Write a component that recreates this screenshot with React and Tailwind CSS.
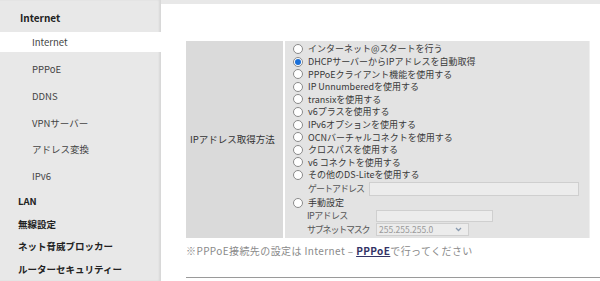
import React from 'react'

const font = { fontFamily: '"Noto Sans CJK JP", "Liberation Sans", sans-serif' }

const subItems = ['Internet', 'PPPoE', 'DDNS', 'VPNサーバー', 'アドレス変換', 'IPv6']
const groups = ['LAN', '無線設定', 'ネット脅威ブロッカー', 'ルーターセキュリティー']

const modes = [
  'インターネット@スタートを行う',
  'DHCPサーバーからIPアドレスを自動取得',
  'PPPoEクライアント機能を使用する',
  'IP Unnumberedを使用する',
  'transixを使用する',
  'v6プラスを使用する',
  'IPv6オプションを使用する',
  'OCNバーチャルコネクトを使用する',
  'クロスパスを使用する',
  'v6 コネクトを使用する',
  'その他のDS-Liteを使用する',
]

function Radio({ checked }) {
  return (
    <span className="flex h-[10px] w-[10px] shrink-0 items-center justify-center rounded-full border border-[#8a8a8a] bg-white">
      {checked && <span className="h-[6px] w-[6px] rounded-full bg-[#1a6fd8]" />}
    </span>
  )
}

function Sidebar() {
  return (
    <div className="w-[161px] shrink-0 bg-[#e8e8e8] pt-[6px] shadow-[inset_-2px_0_2px_rgba(0,0,0,0.07)]">
      <div className="flex h-[23px] items-center pl-[20px] text-[10px] font-bold text-[#222]">Internet</div>
      {subItems.map((s, i) => (
        <div key={s} className="flex h-[26.8px] items-center">
          <div className={`flex h-[20px] w-full items-center pl-[32px] text-[9.5px] text-[#444] ${i === 0 ? 'bg-white' : ''}`}>
            {s}
          </div>
        </div>
      ))}
      {groups.map((g) => (
        <div key={g} className="flex h-[22.6px] items-center pl-[18px] text-[9.5px] font-bold text-[#222]">
          {g}
        </div>
      ))}
    </div>
  )
}

export default function App() {
  return (
    <div className="flex h-[281px] w-[600px] overflow-hidden bg-[#e8e8e8]" style={font}>
      <Sidebar />
      <div className="mt-[4px] flex-1 bg-white pl-[25px] pt-[37px]">
        <div className="flex w-[404px] bg-[#e3e3e3]">
          <div className="flex w-[99px] items-center border-r-2 border-white bg-[#dadada] pl-[4px] text-[9.5px] text-[#333]">
            IPアドレス取得方法
          </div>
          <div className="flex-1 whitespace-nowrap border-r border-[#efefef] pb-[1px] pl-[8px] pr-[4px] pt-[1.7px] text-[9px] text-[#383838]">
            {modes.map((m, i) => (
              <div key={m} className="flex h-[12.6px] items-center gap-[5px]">
                <Radio checked={i === 1} />
                <span className="leading-none">{m}</span>
              </div>
            ))}
            <div className="flex h-[15px] items-center pl-[15px]">
              <span className="w-[61px] shrink-0 tracking-[-1px] text-[#555]">ゲートアドレス</span>
              <div className="h-[14px] w-[210px] border border-[#cfcfcf] bg-[#ececec]" />
            </div>
            <div className="flex h-[12.6px] items-center gap-[5px]">
              <Radio />
              <span className="leading-none">手動設定</span>
            </div>
            <div className="flex h-[14px] items-center pl-[14px]">
              <span className="w-[69px] shrink-0 tracking-[-0.6px] text-[#555]">IPアドレス</span>
              <div className="h-[12px] w-[117px] border border-[#cfcfcf] bg-[#ececec]" />
            </div>
            <div className="flex h-[14px] items-center pl-[14px]">
              <span className="w-[69px] shrink-0 tracking-[-1.2px] text-[#555]">サブネットマスク</span>
              <div className="flex h-[13px] w-[93px] items-center justify-between border border-[#cfcfcf] bg-[#ececec] pl-[2px] pr-[6px] text-[8.5px] text-[#9a9a9a]">
                <span>255.255.255.0</span>
                <svg width="7" height="5" viewBox="0 0 7 5" fill="none" stroke="#8a9bb0" strokeWidth="1.3">
                  <path d="M1 1l2.5 2.5L6 1" />
                </svg>
              </div>
            </div>
          </div>
        </div>
        <p className="mt-[7px] whitespace-nowrap text-[10px] leading-[12px] tracking-[0.4px] text-[#8a8a8a]">
          ※PPPoE接続先の設定は Internet – <span className="font-bold text-[#333366] underline">PPPoE</span>で行ってください
        </p>
        <div className="mt-[20px] h-px bg-[#9a9a9a]" />
      </div>
    </div>
  )
}
